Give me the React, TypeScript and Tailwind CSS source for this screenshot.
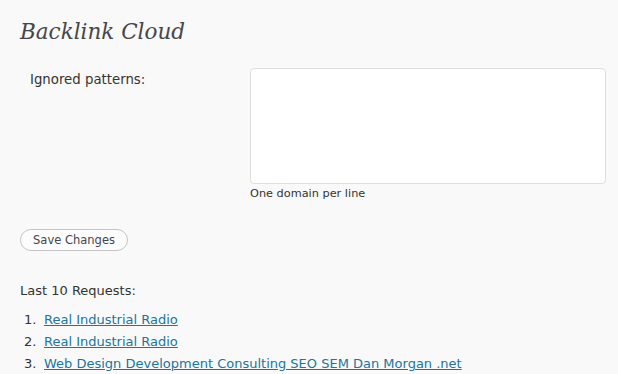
import React from "react";

export default function App() {
  const links = [
    "Real Industrial Radio",
    "Real Industrial Radio",
    "Web Design Development Consulting SEO SEM Dan Morgan .net",
  ];
  return (
    <div
      className="w-[618px] h-[374px] overflow-hidden bg-[#f9f9f9] text-[#333333] pl-[20px]"
      style={{ fontFamily: '"DejaVu Sans", Verdana, sans-serif' }}
    >
      <h2
        className="pt-[17px] text-[21.5px] leading-[30px] italic text-[#464646]"
        style={{ fontFamily: '"DejaVu Serif", Georgia, serif' }}
      >
        Backlink Cloud
      </h2>
      <div className="flex mt-[21px]">
        <div className="w-[230px] pl-[10px] pt-[4px] text-[13.3px] leading-[16px]">Ignored patterns:</div>
        <div className="flex flex-col">
          <textarea className="w-[356px] h-[116px] bg-white border border-[#dfdfdf] rounded-[4px] resize-none outline-none" />
          <div className="text-[11.3px] leading-[14px] mt-[3px]">One domain per line</div>
        </div>
      </div>
      <button className="mt-[28px] h-[22px] w-[108px] rounded-full border border-[#c4c4c4] bg-[#fcfcfc] text-[11.5px] leading-[14px] text-[#464646]">
        Save Changes
      </button>
      <div className="mt-[32px] text-[13px] leading-[16px]">Last 10 Requests:</div>
      <ol className="mt-[13px] text-[13px] leading-[16px] flex flex-col gap-[6px]">
        {links.map((l, i) => (
          <li key={i} className="flex">
            <span className="w-[24px] pl-[4px]">{i + 1}.</span>
            <a href="#" className="text-[#21759b] underline">
              {l}
            </a>
          </li>
        ))}
      </ol>
    </div>
  );
}
